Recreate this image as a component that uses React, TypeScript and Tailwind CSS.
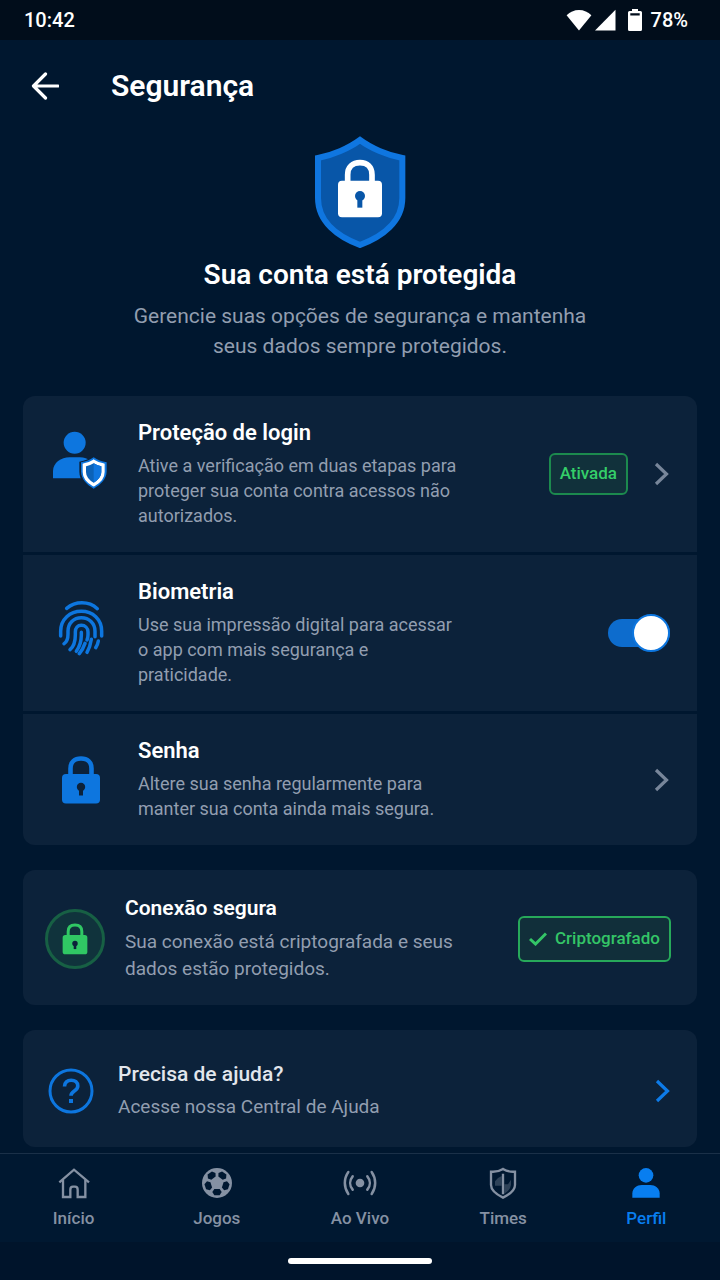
import { useState } from "react";
import type { ReactNode } from "react";

interface IconProps {
  className?: string;
}

interface Tab {
  id: string;
  label: string;
  icon: (props: IconProps) => ReactNode;
}

const tabs: Tab[] = [
  { id: "inicio", label: "Início", icon: HomeIcon },
  { id: "jogos", label: "Jogos", icon: BallIcon },
  { id: "aovivo", label: "Ao Vivo", icon: LiveIcon },
  { id: "times", label: "Times", icon: TeamIcon },
  { id: "perfil", label: "Perfil", icon: ProfileIcon },
];

export default function App() {
  const [biometrics, setBiometrics] = useState(true);
  const [activeTab, setActiveTab] = useState("perfil");

  return (
    <div className="flex min-h-screen flex-col bg-[#00172f] font-['Roboto',sans-serif] text-white">
      <StatusBar />

      {/* Header */}
      <header className="flex h-[92px] items-center gap-[52px] px-[31px]">
        <button type="button" aria-label="Voltar">
          <svg viewBox="0 0 28 28" className="size-7" fill="none" stroke="currentColor" strokeWidth="3.2">
            <path d="M27 14H3M14.5 2 2.5 14l12 12" strokeLinejoin="round" strokeLinecap="round" />
          </svg>
        </button>
        <h1 className="text-[30px] leading-9 font-semibold">Segurança</h1>
      </header>

      <main className="flex flex-1 flex-col px-[23px] pb-1">
        {/* Hero */}
        <section className="flex flex-col items-center pt-1 text-center">
          <HeroShield className="h-28 w-24" />
          <h2 className="mt-[9px] text-[28px] leading-9 font-semibold">Sua conta está protegida</h2>
          <p className="mt-2 max-w-[480px] text-[21px] leading-[30px] text-[#929eb0]">
            Gerencie suas opções de segurança e mantenha seus dados sempre protegidos.
          </p>
        </section>

        <section className="mt-[35px] flex flex-col gap-[3px] overflow-hidden rounded-xl">
          <OptionRow
            icon={<LoginShieldIcon className="mb-7 h-[60px] w-[58px]" />}
            title="Proteção de login"
            text="Ative a verificação em duas etapas para proteger sua conta contra acessos não autorizados."
          >
            <span className="flex h-[42px] items-center rounded-md border-2 border-[#1c8a4e] bg-[#11313b] px-[9px] text-[17px] font-medium text-[#34ce69]">
              Ativada
            </span>
            <ChevronButton label="Abrir proteção de login" />
          </OptionRow>

          <OptionRow
            icon={<FingerprintIcon className="mb-2.5 h-14 w-[46px]" />}
            title="Biometria"
            text="Use sua impressão digital para acessar o app com mais segurança e praticidade."
          >
            <Toggle label="Biometria" checked={biometrics} onChange={setBiometrics} />
          </OptionRow>

          <OptionRow
            icon={<LockIcon className="h-12 w-10 text-[#0d76df]" />}
            title="Senha"
            text="Altere sua senha regularmente para manter sua conta ainda mais segura."
          >
            <ChevronButton label="Alterar senha" />
          </OptionRow>
        </section>

        {/* Connection */}
        <section className="mt-[25px] flex items-center rounded-xl bg-[#0c223a] pt-[26px] pr-[26px] pb-[23px] pl-[22px]">
          <div className="flex size-[60px] shrink-0 items-center justify-center rounded-full border-[3px] border-[#176044] bg-[#10333c]">
            <LockIcon className="h-8 w-[26px] text-[#30c764]" />
          </div>
          <div className="ml-5 min-w-0 flex-1">
            <h3 className="text-[21px] leading-6 font-semibold">Conexão segura</h3>
            <p className="mt-2 max-w-[350px] text-[19px] leading-[27px] text-[#929eb0]">
              Sua conexão está criptografada e seus dados estão protegidos.
            </p>
          </div>
          <span className="flex h-[46px] shrink-0 items-center gap-2 rounded-md border-2 border-[#27a95a] bg-[#112f3a] px-[9px] text-[17px] font-medium text-[#34c567]">
            <svg viewBox="0 0 18 14" className="h-3.5 w-[18px]" fill="none" stroke="currentColor" strokeWidth="3">
              <path d="m1 7 5.5 5L17 1.5" />
            </svg>
            Criptografado
          </span>
        </section>

        {/* Help */}
        <section className="mt-[25px] flex items-center rounded-xl bg-[#0c223a] pt-8 pr-[26px] pb-7 pl-[25px]">
          <svg viewBox="0 0 46 46" className="size-[46px] shrink-0 text-[#0d76df]" fill="none" stroke="currentColor">
            <circle cx="23" cy="23" r="21" strokeWidth="3" />
            <path
              d="M16.5 18.5c0-4 2.8-6.3 6.7-6.3 3.8 0 6.6 2.2 6.6 5.7 0 5.2-6.8 4.8-6.8 9.8"
              strokeWidth="3.6"
            />
            <path d="M21 31h4v4h-4z" fill="currentColor" stroke="none" />
          </svg>
          <div className="ml-6 min-w-0 flex-1">
            <h3 className="text-[21px] leading-6 font-medium text-[#e2e6ec]">Precisa de ajuda?</h3>
            <p className="mt-2 text-[19px] leading-[25px] text-[#929eb0]">Acesse nossa Central de Ajuda</p>
          </div>
          <ChevronButton label="Abrir Central de Ajuda" accent />
        </section>
      </main>

      {/* Bottom tabs */}
      <nav className="grid h-[89px] shrink-0 grid-cols-5 border-t border-[#1a3048] bg-[#001831] px-0.5">
        {tabs.map((tab) => (
          <button
            key={tab.id}
            type="button"
            onClick={() => setActiveTab(tab.id)}
            className={`flex flex-col items-center gap-1.5 pt-3 text-[17px] leading-6 font-medium ${
              activeTab === tab.id ? "text-[#087ef0]" : "text-[#8591a3]"
            }`}
          >
            <tab.icon className="size-[34px]" />
            {tab.label}
          </button>
        ))}
      </nav>
      <div className="flex h-[38px] shrink-0 items-center justify-center bg-[#00142b]">
        <div className="h-1.5 w-36 rounded-full bg-white" />
      </div>
    </div>
  );
}

function StatusBar() {
  return (
    <div className="flex h-10 items-center justify-between bg-[#010d1b] pr-8 pl-6 text-xl font-medium">
      <span>10:42</span>
      <div className="flex items-center">
        <svg viewBox="0 0 26 22" className="h-[22px] w-[26px]" fill="currentColor">
          <path d="M13 21.5.6 6.2C4 3 8.2 1 13 1s9 2 12.400 5.200z" />
        </svg>
        <svg viewBox="0 0 21 22" className="ml-[3px] h-[22px] w-[21px]" fill="currentColor">
          <path d="M20.500.8V21.500H0z" />
        </svg>
        <svg viewBox="0 0 14 24" className="mr-[9px] ml-3 h-6 w-3.5" fill="currentColor" fillRule="evenodd">
          <path d="M4 1h6v2h2.500Q14 3 14 4.500v17q0 1.500-1.500 1.500h-11Q0 23 0 21.500v-17Q0 3 1.500 3H4zM2.300 5.300v2.200h9.400V5.300z" />
        </svg>
        <span>78%</span>
      </div>
    </div>
  );
}

interface OptionRowProps {
  icon: ReactNode;
  title: string;
  text: string;
  children: ReactNode;
}

function OptionRow({ icon, title, text, children }: OptionRowProps) {
  return (
    <div className="flex items-center bg-[#0c223a] py-6 pr-[27px]">
      <div className="flex w-[115px] shrink-0 justify-center">{icon}</div>
      <div className="min-w-0 flex-1">
        <h3 className="text-[22px] leading-[25px] font-semibold">{title}</h3>
        <p className="mt-2 max-w-[326px] text-lg leading-[25px] text-[#929eb0]">{text}</p>
      </div>
      <div className="flex shrink-0 items-center gap-6">{children}</div>
    </div>
  );
}

function ChevronButton({ label, accent = false }: { label: string; accent?: boolean }) {
  return (
    <button type="button" aria-label={label} className={accent ? "text-[#0d7be8]" : "text-[#78869a]"}>
      <svg viewBox="0 0 18 24" className="h-6 w-[18px]" fill="none" stroke="currentColor" strokeWidth="3.2">
        <path d="m4 2 10.500 10L4 22" />
      </svg>
    </button>
  );
}

interface ToggleProps {
  label: string;
  checked: boolean;
  onChange: (checked: boolean) => void;
}

function Toggle({ label, checked, onChange }: ToggleProps) {
  return (
    <label className="relative flex h-[38px] w-[62px] cursor-pointer items-center">
      <input
        type="checkbox"
        aria-label={label}
        className="peer sr-only"
        checked={checked}
        onChange={(e) => onChange(e.target.checked)}
      />
      <span className="h-7 w-full rounded-full bg-[#34465c] peer-checked:bg-[#0d6ccd]" />
      <span className="absolute left-0 size-[38px] rounded-full border-2 border-[#34465c] bg-white peer-checked:right-0 peer-checked:left-auto peer-checked:border-[#0d76df]" />
    </label>
  );
}

function HeroShield({ className }: IconProps) {
  return (
    <svg viewBox="66 34 288 336" className={className}>
      <path
        d="M210 46C178 70 128 92 84 100V220C84 292 144 336 210 361C276 336 337 292 337 220V100C292 92 242 70 210 46Z"
        fill="#0856a8"
        stroke="#0f76e0"
        strokeWidth="18"
      />
      <path d="M173 172v-22c0-23 15-36 37-36s36 13 36 36v22" fill="none" stroke="#fff" strokeWidth="17" />
      <rect x="144" y="168" width="132" height="110" rx="12" fill="#fff" />
      <circle cx="210" cy="214" r="15" fill="#0856a8" />
      <path d="M202 220h15v29h-15z" fill="#0856a8" />
    </svg>
  );
}

function LoginShieldIcon({ className }: IconProps) {
  return (
    <svg viewBox="97 122 174 180" className={className}>
      <circle cx="165" cy="160" r="33" fill="#0d76df" />
      <path d="M100 267v-22c0-24 24-41 50-41h30c14 0 24 4 32 10v53z" fill="#0d76df" />
      <path
        d="M222 199c-12 9-26 14-43 18v30c0 26 20 45 43 56 23-11 44-30 44-56v-30c-17-4-31-9-44-18z"
        fill="#0c223a"
      />
      <path
        d="M222 204c-11 8-23 12-38 15v27c0 24 18 41 38 52 20-11 39-28 39-52v-27c-15-3-28-7-39-15z"
        fill="#0d76df"
      />
      <path
        d="M222 216c-9 6-18 9-28 11v21c0 17 13 30 28 38 15-8 28-21 28-38v-21c-10-2-19-5-28-11z"
        fill="#0b62b8"
        stroke="#fff"
        strokeWidth="10"
      />
      <path d="M222 222c7 4 15 7 23 9v17c0 13-11 25-23 32z" fill="#0f76e0" />
    </svg>
  );
}

function FingerprintIcon({ className }: IconProps) {
  return (
    <svg viewBox="110 86 138 168" className={className} fill="none" stroke="#0d76df" strokeWidth="10.5" strokeLinecap="round">
      <path d="M136 111c26-22 66-23 92 1" />
      <path d="M118 194v-14c0-36 28-60 62-60s61 24 61 60v14" />
      <path d="M128 217c9-5 12-15 12-29v-8c0-24 17-41 40-41s41 17 41 41v16" />
      <path d="M146 235c12-10 16-26 16-45v-8c0-12 7-20 18-20s20 8 20 20v8c0 6-1 11-3 16" />
      <path d="M180 183v9c0 18-5 34-15 48" />
      <path d="M191 216c-4 12-10 22-17 31" />
      <path d="M210 204c-2 14-6 27-13 39" />
      <path d="M231 209c-1 7-4 14-8 20" />
    </svg>
  );
}

function LockIcon({ className }: IconProps) {
  return (
    <svg viewBox="0 0 40 48" className={className}>
      <path
        d="M9.500 19v-6.500C9.500 6 13.500 2.500 20 2.500S30.500 6 30.500 12.500V19"
        fill="none"
        stroke="currentColor"
        strokeWidth="4.600"
      />
      <rect x="1" y="18" width="38" height="29.500" rx="4" fill="currentColor" />
      <circle cx="20" cy="31" r="4.200" fill="#0c223a" />
      <path d="M18 32h4v7.500h-4z" fill="#0c223a" />
    </svg>
  );
}

function HomeIcon({ className }: IconProps) {
  return (
    <svg viewBox="168 62 102 102" className={className} fill="none" stroke="currentColor" strokeWidth="7">
      <path d="m175 111 44-38 45 38" />
      <path d="M186 104v51h22v-22q0-9 8-9h6q8 0 8 9v22h23v-51" />
    </svg>
  );
}

function BallIcon({ className }: IconProps) {
  return (
    <svg viewBox="-51 -51 102 102" className={className}>
      <circle r="45" fill="currentColor" />
      {[36, 108, 180, 252, 324].map((angle) => (
        <g key={angle} transform={`rotate(${angle})`} fill="#001831">
          <path d="M-8-18H8L14-27 8-37H-8l-6 10z" />
        </g>
      ))}
    </svg>
  );
}

function LiveIcon({ className }: IconProps) {
  return (
    <svg viewBox="-51 -51 102 102" className={className} fill="none" stroke="currentColor" strokeWidth="7.500" strokeLinecap="round">
      <circle r="13" fill="currentColor" stroke="none" />
      <path d="M-22-20c-10 12-10 28 0 40M22-20c10 12 10 28 0 40" />
      <path d="M-35-33c-14 20-14 46 0 66M35-33c14 20 14 46 0 66" />
    </svg>
  );
}

function TeamIcon({ className }: IconProps) {
  return (
    <svg viewBox="-51 -51 102 102" className={className}>
      <path d="M-24-5q8-12 20-16v29h-20zM4 4h11l9-14v16q-2 16-20 26z" fill="currentColor" opacity=".35" />
      <path
        d="M0-42c-11 7-23 9-36 8V6c0 17 16 28 36 38C20 34 36 23 36 6v-40c-13 1-25-1-36-8zM0-28v62"
        fill="none"
        stroke="currentColor"
        strokeWidth="7"
      />
    </svg>
  );
}

function ProfileIcon({ className }: IconProps) {
  return (
    <svg viewBox="-51 -51 102 102" className={className} fill="currentColor">
      <circle cy="-23" r="22" />
      <path d="M-41 44V31C-41 16-27 6-13 6h26c14 0 28 10 28 25v13z" />
    </svg>
  );
}
